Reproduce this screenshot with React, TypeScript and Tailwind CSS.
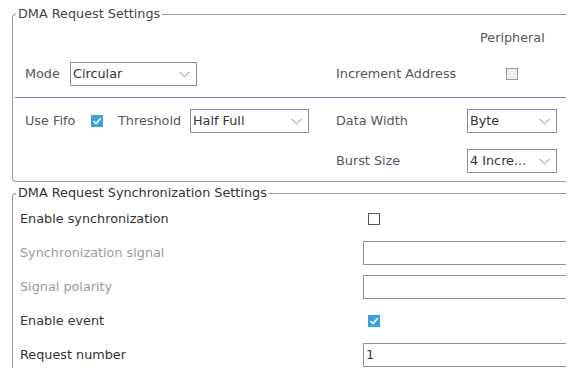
import React from "react";

const font = { fontFamily: '"DejaVu Sans", Verdana, sans-serif' };

function Chevron() {
  return (
    <svg width="11" height="7" viewBox="0 0 11 7" className="shrink-0">
      <polyline points="0.5,0.8 5.5,5.8 10.5,0.8" fill="none" stroke="#8a8a8a" strokeWidth="1" />
    </svg>
  );
}

function Select({ value, width }: { value: string; width: string }) {
  return (
    <div className={`flex h-[24px] items-center border border-[#8e8e8e] bg-white pl-[2px] pr-[6px] ${width}`}>
      <span className="flex-1 truncate text-[#333]">{value}</span>
      <Chevron />
    </div>
  );
}

function Check({ checked, variant }: { checked?: boolean; variant?: "grey" | "white" }) {
  if (checked) {
    return (
      <div className="flex h-[12px] w-[12px] items-center justify-center bg-[#3ba3dc]">
        <svg width="10" height="8" viewBox="0 0 10 8">
          <polyline points="1.5,4 4,6.5 8.8,1.2" fill="none" stroke="#fff" strokeWidth="1.6" />
        </svg>
      </div>
    );
  }
  return variant === "grey" ? (
    <div className="h-[12px] w-[12px] border border-[#9a9a9a] bg-[#efefef]" />
  ) : (
    <div className="h-[12px] w-[12px] border border-[#555] bg-white" />
  );
}

function TextBox({ value }: { value?: string }) {
  return (
    <div className="flex h-[24px] w-[240px] items-center border border-[#8e8e8e] bg-white pl-[2px] text-[#3a2d55]">
      {value}
    </div>
  );
}

export default function App() {
  return (
    <div className="h-[368px] w-[574px] bg-white text-[12.8px] leading-[16px]" style={font}>
      <div className="w-[566px] overflow-hidden pt-[6px]">
        {/* DMA Request Settings */}
        <fieldset className="ml-[12px] w-[600px] rounded-l-[4px] border border-r-0 border-[#9a9a9a] px-0 pb-[8px]">
          <legend className="ml-[3px] px-[2px] text-[#444]">DMA Request Settings</legend>

          <div className="mt-[8px] flex text-[#55555f]">
            <div className="w-[467px]" />
            <span>Peripheral</span>
          </div>

          <div className="mt-[16px] flex h-[24px] items-center text-[#55555f]">
            <span className="w-[57px] pl-[12px]">Mode</span>
            <Select value="Circular" width="w-[127px]" />
            <span className="ml-[139px] w-[170px]">Increment Address</span>
            <Check variant="grey" />
          </div>

          <div className="ml-[2px] mt-[11px] h-px bg-[#7283ad]" />

          <div className="mt-[11px] flex h-[24px] items-center text-[#55555f]">
            <span className="w-[78px] pl-[12px]">Use Fifo</span>
            <Check checked />
            <span className="ml-[15px] w-[72px]">Threshold</span>
            <Select value="Half Full" width="w-[119px]" />
            <span className="ml-[27px] w-[131px]">Data Width</span>
            <Select value="Byte" width="w-[90px]" />
          </div>

          <div className="mt-[16px] flex h-[24px] items-center text-[#55555f]">
            <span className="ml-[323px] w-[131px]">Burst Size</span>
            <Select value="4 Incre..." width="w-[90px]" />
          </div>
        </fieldset>

        {/* DMA Request Synchronization Settings */}
        <fieldset className="ml-[12px] mt-[3px] h-[200px] w-[600px] rounded-tl-[4px] border border-b-0 border-r-0 border-[#9a9a9a] px-0">
          <legend className="ml-[3px] px-[2px] text-[#333]">DMA Request Synchronization Settings</legend>
          <div className="flex flex-col gap-[10px] pt-[6px]">
            <div className="flex h-[24px] items-center text-[#333]">
              <span className="w-[355px] pl-[7px]">Enable synchronization</span>
              <Check />
            </div>
            <div className="flex h-[24px] items-center text-[#9a9a9a]">
              <span className="w-[350px] pl-[7px]">Synchronization signal</span>
              <TextBox />
            </div>
            <div className="flex h-[24px] items-center text-[#9a9a9a]">
              <span className="w-[350px] pl-[7px]">Signal polarity</span>
              <TextBox />
            </div>
            <div className="flex h-[24px] items-center text-[#333]">
              <span className="w-[355px] pl-[7px]">Enable event</span>
              <Check checked />
            </div>
            <div className="flex h-[24px] items-center text-[#333]">
              <span className="w-[350px] pl-[7px]">Request number</span>
              <TextBox value="1" />
            </div>
          </div>
        </fieldset>
      </div>
    </div>
  );
}
